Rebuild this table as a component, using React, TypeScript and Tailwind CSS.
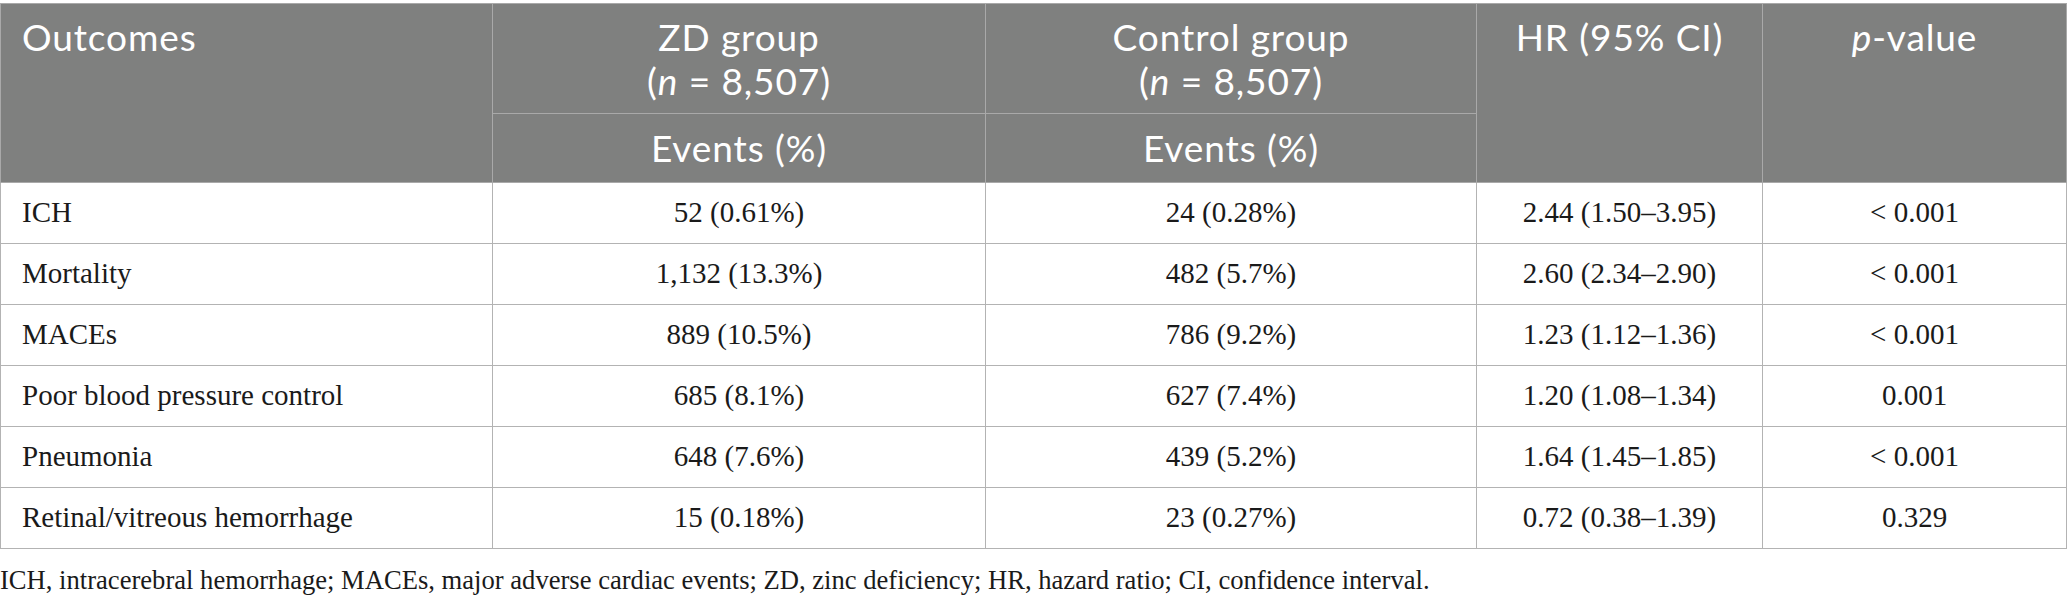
const rows = [
  { name: 'ICH', zd: '52 (0.61%)', ctrl: '24 (0.28%)', hr: '2.44 (1.50–3.95)', p: '< 0.001' },
  { name: 'Mortality', zd: '1,132 (13.3%)', ctrl: '482 (5.7%)', hr: '2.60 (2.34–2.90)', p: '< 0.001' },
  { name: 'MACEs', zd: '889 (10.5%)', ctrl: '786 (9.2%)', hr: '1.23 (1.12–1.36)', p: '< 0.001' },
  { name: 'Poor blood pressure control', zd: '685 (8.1%)', ctrl: '627 (7.4%)', hr: '1.20 (1.08–1.34)', p: '0.001' },
  { name: 'Pneumonia', zd: '648 (7.6%)', ctrl: '439 (5.2%)', hr: '1.64 (1.45–1.85)', p: '< 0.001' },
  { name: 'Retinal/vitreous hemorrhage', zd: '15 (0.18%)', ctrl: '23 (0.27%)', hr: '0.72 (0.38–1.39)', p: '0.329' },
];

const sans = "font-['Lato','Open_Sans',sans-serif]";

export default function App() {
  return (
    <div className="w-[2067px] h-[603px] bg-white pt-[3px] overflow-hidden">
      <table className="w-full table-fixed border-collapse">
        <colgroup>
          <col className="w-[492px]" />
          <col className="w-[493px]" />
          <col className="w-[491px]" />
          <col className="w-[286px]" />
          <col />
        </colgroup>
        <thead className={`${sans} text-white text-[37px] tracking-[0.9px] leading-[44px] bg-[#7f807f]`}>
          <tr className="h-[110px]">
            <th rowSpan={2} className="border border-[#a9a9a9] align-top text-left font-normal pl-[21px] pt-[11px]">Outcomes</th>
            <th className="border border-[#a9a9a9] align-top text-center font-normal pt-[11px]">
              ZD group
              <br />
              (<i>n</i> = 8,507)
            </th>
            <th className="border border-[#a9a9a9] align-top text-center font-normal pt-[11px]">
              Control group
              <br />
              (<i>n</i> = 8,507)
            </th>
            <th rowSpan={2} className="border border-[#a9a9a9] align-top text-center font-normal pt-[11px]">HR (95% CI)</th>
            <th rowSpan={2} className="border border-[#a9a9a9] align-top text-center font-normal pt-[11px]">
              <i>p</i>-value
            </th>
          </tr>
          <tr className="h-[69px]">
            <th className="border border-[#a9a9a9] align-middle text-center font-normal">Events (%)</th>
            <th className="border border-[#a9a9a9] align-middle text-center font-normal">Events (%)</th>
          </tr>
        </thead>
        <tbody className="font-['Liberation_Serif',serif] text-[29px] text-[#1a1a1a]">
          {rows.map((r) => (
            <tr key={r.name} className="h-[61px]">
              <td className="border border-[#b3b3b3] pl-[21px] align-middle">{r.name}</td>
              <td className="border border-[#b3b3b3] text-center align-middle">{r.zd}</td>
              <td className="border border-[#b3b3b3] text-center align-middle">{r.ctrl}</td>
              <td className="border border-[#b3b3b3] text-center align-middle">{r.hr}</td>
              <td className="border border-[#b3b3b3] text-center align-middle">{r.p}</td>
            </tr>
          ))}
        </tbody>
      </table>
      <p className="mt-[16px] font-['Liberation_Serif',serif] text-[26.6px] leading-[30px] text-[#1a1a1a]">
        ICH, intracerebral hemorrhage; MACEs, major adverse cardiac events; ZD, zinc deficiency; HR, hazard ratio; CI, confidence interval.
      </p>
    </div>
  );
}
